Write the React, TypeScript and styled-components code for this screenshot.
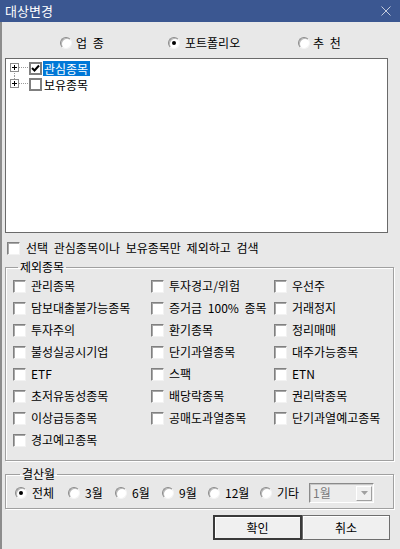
import React from 'react';
import styled, { createGlobalStyle } from 'styled-components';

const Global = createGlobalStyle`
  html, body { margin: 0; padding: 0; background: #e8e8e8; }
  body {
    font-family: "Noto Sans CJK KR", "Noto Sans", sans-serif;
    font-size: 12px;
    color: #000;
  }
  * { box-sizing: border-box; }
`;

const Window = styled.div`
  width: 400px;
  height: 549px;
  display: flex;
  flex-direction: column;
  background: #e8e8e8;
  overflow: hidden;
`;

const TitleBar = styled.div`
  height: 22px;
  flex: none;
  background: #3b5791;
  color: #fff;
  display: flex;
  align-items: center;
  justify-content: space-between;
  padding: 0 9px 0 5px;
  font-size: 13px;
  line-height: 22px;
`;

const Body = styled.div`
  flex: 1;
  border-left: 2px solid #8c8c8c;
  display: flex;
  flex-direction: column;
  padding-left: 3px;
  word-spacing: 3px;
`;

const TopRadios = styled.div`
  height: 36px;
  padding: 14px 0 0 55px;
  display: grid;
  grid-template-columns: 108px 130px auto;
  align-items: start;
`;

const Option = styled.label<{ $gap?: number }>`
  display: flex;
  align-items: center;
  gap: ${p => p.$gap ?? 4}px;
  height: 14px;
  line-height: 14px;
  white-space: pre;
`;

const RadioDot = styled.span<{ $on?: boolean }>`
  width: 12px;
  height: 12px;
  flex: none;
  border-radius: 50%;
  background: #fff;
  border: 1px solid;
  border-color: #8a8a8a #f4f4f4 #f4f4f4 #8a8a8a;
  box-shadow: inset 1px 1px 0 #b8b8b8;
  display: flex;
  align-items: center;
  justify-content: center;
  &::after {
    content: '';
    width: 4px;
    height: 4px;
    border-radius: 50%;
    background: ${p => (p.$on ? '#000' : 'transparent')};
  }
`;

const CheckBox = styled.span`
  width: 13px;
  height: 13px;
  flex: none;
  background: #fff;
  border: 1px solid;
  border-color: #808080 #f2f2f2 #f2f2f2 #808080;
  box-shadow: inset 1px 1px 0 #a8a8a8;
`;

const TreeBox = styled.div`
  width: 383px;
  height: 175px;
  flex: none;
  background: #fff;
  border: 1px solid #6a6a6a;
  padding: 1px 0 0 4px;
`;

const TreeRow = styled.div`
  height: 16px;
  display: flex;
  align-items: center;
`;

const TreeCheck = styled.span`
  width: 13px;
  height: 13px;
  flex: none;
  margin-left: 1px;
  border: 2px solid #7f7f7f;
  background: #fff;
  display: flex;
  align-items: center;
  justify-content: center;
`;

const TreeLabel = styled.span<{ $selected?: boolean }>`
  margin-left: 1px;
  padding: 0 2px 0 1px;
  height: 15px;
  line-height: 15px;
  background: ${p => (p.$selected ? '#0078d7' : 'transparent')};
  color: ${p => (p.$selected ? '#fff' : '#000')};
`;

const ScopeRow = styled(Option)`
  margin: 8px 0 0 2px;
  gap: 6px;
  height: 14px;
`;

const Group = styled.fieldset<{ $width: number }>`
  width: ${p => p.$width}px;
  margin: 0;
  min-width: 0;
  border: 1px solid #a0a0a0;
  box-shadow: 1px 1px 0 #fff, inset 1px 1px 0 #fff;
  border-radius: 0;
`;

const Legend = styled.legend`
  margin-left: 5px;
  padding: 0 2px;
  line-height: 14px;
  height: 14px;
`;

const ExcludeGroup = styled(Group)`
  margin-top: 5px;
  padding: 1px 0 9px 7px;
`;

const ExcludeGrid = styled.div`
  display: grid;
  grid-template-columns: 138px 123px auto;
  grid-auto-rows: 22px;
  align-items: center;
`;

const SettleGroup = styled(Group)`
  margin-top: 6px;
  padding: 4px 0 7px 9px;
`;

const SettleRow = styled.div`
  display: flex;
  align-items: center;
  height: 16px;
`;

const SettleItem = styled(Option)<{ $w: number }>`
  width: ${p => p.$w}px;
  flex: none;
`;

const Combo = styled.div`
  width: 65px;
  height: 20px;
  flex: none;
  display: flex;
  align-items: center;
  justify-content: space-between;
  background: #ececec;
  border: 1px solid;
  border-color: #8a8a8a #fff #fff #8a8a8a;
  box-shadow: inset 1px 1px 0 #c8c8c8;
  padding: 0 1px 0 3px;
  color: #7a7a7a;
  line-height: 16px;
`;

const ComboArrow = styled.span`
  width: 16px;
  height: 15px;
  display: flex;
  align-items: center;
  justify-content: center;
  background: #f0f0f0;
  border: 1px solid;
  border-color: #fff #a0a0a0 #a0a0a0 #fff;
`;

const ButtonRow = styled.div`
  margin-top: 6px;
  padding-right: 10px;
  display: flex;
  justify-content: flex-end;
`;

const Button = styled.button<{ $default?: boolean; $w: number }>`
  width: ${p => p.$w}px;
  height: 25px;
  font: inherit;
  font-size: 12px;
  color: #000;
  background: #f0f0f0;
  padding: 0;
  border: ${p => (p.$default ? '2px solid #3a3a3a' : '1px solid #6e6e6e')};
  box-shadow: inset 1px 1px 0 #fff;
  cursor: default;
`;

const TreeGlyph: React.FC<{ first?: boolean; last?: boolean }> = ({ first, last }) => (
  <svg width="18" height="16" viewBox="0 0 18 16" style={{ flex: 'none' }}>
    <rect x="0.5" y="3.5" width="8" height="8" fill="#fff" stroke="#8c8c8c" />
    <line x1="2" y1="7.5" x2="7" y2="7.5" stroke="#000" />
    <line x1="4.5" y1="5" x2="4.5" y2="10" stroke="#000" />
    <line x1="9" y1="7.5" x2="18" y2="7.5" stroke="#9a9a9a" strokeDasharray="1 1" />
    {first && <line x1="4.5" y1="13" x2="4.5" y2="16" stroke="#9a9a9a" strokeDasharray="1 1" />}
    {last && <line x1="4.5" y1="0" x2="4.5" y2="3" stroke="#9a9a9a" strokeDasharray="1 1" />}
  </svg>
);

const excluded = [
  '관리종목', '투자경고/위험', '우선주',
  '담보대출불가능종목', '증거금 100% 종목', '거래정지',
  '투자주의', '환기종목', '정리매매',
  '불성실공시기업', '단기과열종목', '대주가능종목',
  'ETF', '스팩', 'ETN',
  '초저유동성종목', '배당락종목', '권리락종목',
  '이상급등종목', '공매도과열종목', '단기과열예고종목',
  '경고예고종목',
];

const months: { label: string; w: number; on?: boolean }[] = [
  { label: '전체', w: 53, on: true },
  { label: '3월', w: 47 },
  { label: '6월', w: 47 },
  { label: '9월', w: 46 },
  { label: '12월', w: 52 },
  { label: '기타', w: 49 },
];

export default function App() {
  return (
    <Window>
      <Global />
      <TitleBar>
        <span>대상변경</span>
        <svg width="10" height="10" viewBox="0 0 10 10">
          <path d="M0.5 0.5 L9.5 9.5 M9.5 0.5 L0.5 9.5" stroke="#c3cbdc" strokeWidth="1" />
        </svg>
      </TitleBar>
      <Body>
        <TopRadios>
          <Option><RadioDot />업 종</Option>
          <Option $gap={5}><RadioDot $on />포트폴리오</Option>
          <Option $gap={3}><RadioDot />추 천</Option>
        </TopRadios>
        <TreeBox>
          <TreeRow>
            <TreeGlyph first />
            <TreeCheck>
              <svg width="9" height="9" viewBox="0 0 9 9">
                <path d="M1 4 L3.5 6.5 L8 1.5" fill="none" stroke="#000" strokeWidth="2" />
              </svg>
            </TreeCheck>
            <TreeLabel $selected>관심종목</TreeLabel>
          </TreeRow>
          <TreeRow>
            <TreeGlyph last />
            <TreeCheck />
            <TreeLabel>보유종목</TreeLabel>
          </TreeRow>
        </TreeBox>
        <ScopeRow><CheckBox />선택 관심종목이나 보유종목만 제외하고 검색</ScopeRow>
        <ExcludeGroup $width={389}>
          <Legend>제외종목</Legend>
          <ExcludeGrid>
            {excluded.map(t => (
              <Option key={t} $gap={5}><CheckBox />{t}</Option>
            ))}
          </ExcludeGrid>
        </ExcludeGroup>
        <SettleGroup $width={389}>
          <Legend>결산월</Legend>
          <SettleRow>
            {months.map(m => (
              <SettleItem key={m.label} $w={m.w} $gap={5}>
                <RadioDot $on={m.on} />{m.label}
              </SettleItem>
            ))}
            <Combo>
              <span>1월</span>
              <ComboArrow>
                <svg width="7" height="4" viewBox="0 0 7 4">
                  <path d="M0 0 L7 0 L3.5 4 Z" fill="#a0a0a0" />
                </svg>
              </ComboArrow>
            </Combo>
          </SettleRow>
        </SettleGroup>
        <ButtonRow>
          <Button $default $w={89}>확인</Button>
          <Button $w={88}>취소</Button>
        </ButtonRow>
      </Body>
    </Window>
  );
}
